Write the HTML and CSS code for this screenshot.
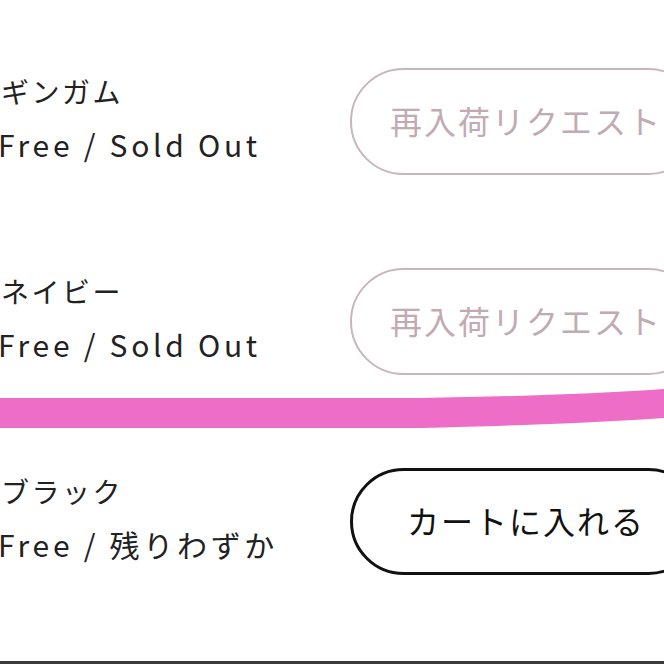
FILE: index.html
```html
<!DOCTYPE html>
<html lang="ja">
<head>
  <meta charset="UTF-8" />
  <meta name="viewport" content="width=device-width, initial-scale=1.0"/>
  <title>カラー選択</title>
  <link rel="stylesheet" href="styles.css">
</head>
<body>

  <div class="variants">
    <div class="variant">
      <div class="variant-info">
        <div class="variant-name">ギンガム</div>
        <div class="variant-stock">Free / Sold Out</div>
      </div>
      <button class="btn btn-restock">再入荷リクエスト</button>
    </div>

    <div class="variant">
      <div class="variant-info">
        <div class="variant-name">ネイビー</div>
        <div class="variant-stock">Free / Sold Out</div>
      </div>
      <button class="btn btn-restock">再入荷リクエスト</button>
    </div>

    <div class="variant">
      <div class="variant-info">
        <div class="variant-name">ブラック</div>
        <div class="variant-stock">Free / 残りわずか</div>
      </div>
      <button class="btn btn-cart">カートに入れる</button>
    </div>
  </div>

  <!-- marker stroke -->
  <svg class="marker" width="664" height="50" viewBox="0 0 664 50">
    <path d="M0 9 L420 9 Q560 7 664 0 L664 29 Q560 36 420 39 L0 39 Z" fill="#ee6dc7"/>
  </svg>

  <div class="bottom-line"></div>

</body>
</html>
```

FILE: styles.css
```css
html, body {
  margin: 0;
  height: 664px;
  overflow: hidden;
  background: #fff;
}

body {
  position: relative;
  font-family: "Noto Sans CJK JP", "Noto Sans", sans-serif;
  color: #222;
}

.variants {
  padding-top: 68px;
  display: flex;
  flex-direction: column;
  gap: 93px;
}

.variant {
  display: flex;
  align-items: center;
  height: 107px;
}

.variant-info {
  width: 350px;
  flex-shrink: 0;
  padding-bottom: 7px;
}

.variant-name {
  font-size: 28px;
  letter-spacing: 2.5px;
  line-height: 53px;
  margin-left: 1px;
}

.variant-stock {
  font-size: 30px;
  letter-spacing: 3.7px;
  line-height: 53px;
  margin-left: -2px;
}

.btn {
  flex-shrink: 0;
  width: 352px;
  height: 107px;
  border-radius: 54px;
  background: #fff;
  font-family: inherit;
  font-size: 32px;
  letter-spacing: 2px;
  padding: 0 0 4px;
  text-align: center;
}

.btn-restock {
  border: 2px solid #c8b6bc;
  color: #c2aab3;
}

.btn-cart {
  border: 3px solid #111;
  color: #111;
}

.marker {
  position: absolute;
  left: 0;
  top: 389px;
}

.bottom-line {
  position: absolute;
  left: 0;
  right: 0;
  bottom: 0;
  height: 3px;
  background: #3a3a3a;
}
```
